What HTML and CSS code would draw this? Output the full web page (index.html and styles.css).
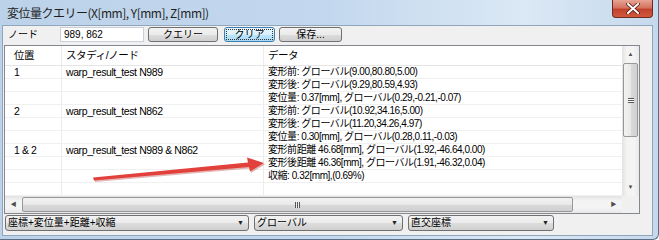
FILE: index.html
```html
<!DOCTYPE html>
<html lang="ja">
	<head>
		<title>変位量クエリー</title>
		<meta charset="utf-8">
		<link rel="stylesheet" href="styles.css">
	</head>
	<body>
		<div class="window">
			<div class="titlebar">
				<span class="title">変位量クエリー(X[mm], Y[mm], Z[mm])</span>
				<div class="close">
					<svg width="14" height="11" viewBox="0 0 14 11"><path d="M2 1 L12 10 M12 1 L2 10" stroke="#5a1a14" stroke-width="3.6" stroke-linecap="round"/><path d="M2 1 L12 10 M12 1 L2 10" stroke="#ffffff" stroke-width="2" stroke-linecap="round"/></svg>
				</div>
			</div>
			<div class="client">
				<div class="toolbar">
					<span class="label">ノード</span>
					<div class="textbox">989, 862</div>
					<div class="btn w-query">クエリー</div>
					<div class="btn w-clear focus"><span class="focusrect">クリア</span></div>
					<div class="btn w-save">保存...</div>
				</div>
				<div class="listview">
					<div class="list-main">
						<div class="table">
							<div class="row header">
								<div class="cell">位置</div>
								<div class="cell">スタディ/ノード</div>
								<div class="cell">データ</div>
							</div>
							<div class="row"><div class="cell">1</div><div class="cell">warp_result_test N989</div><div class="cell">変形前: グローバル(9.00,80.80,5.00)</div></div>
							<div class="row"><div class="cell"></div><div class="cell"></div><div class="cell">変形後: グローバル(9.29,80.59,4.93)</div></div>
							<div class="row"><div class="cell"></div><div class="cell"></div><div class="cell">変位量: 0.37[mm], グローバル(0.29,-0.21,-0.07)</div></div>
							<div class="row"><div class="cell">2</div><div class="cell">warp_result_test N862</div><div class="cell">変形前: グローバル(10.92,34.16,5.00)</div></div>
							<div class="row"><div class="cell"></div><div class="cell"></div><div class="cell">変形後: グローバル(11.20,34.26,4.97)</div></div>
							<div class="row"><div class="cell"></div><div class="cell"></div><div class="cell">変位量: 0.30[mm], グローバル(0.28,0.11,-0.03)</div></div>
							<div class="row"><div class="cell">1 &amp; 2</div><div class="cell">warp_result_test N989 &amp; N862</div><div class="cell">変形前距離 46.68[mm], グローバル(1.92,-46.64,0.00)</div></div>
							<div class="row"><div class="cell"></div><div class="cell"></div><div class="cell">変形後距離 46.36[mm], グローバル(1.91,-46.32,0.04)</div></div>
							<div class="row"><div class="cell"></div><div class="cell"></div><div class="cell">収縮: 0.32[mm],(0.69%)</div></div>
							<div class="row"><div class="cell"></div><div class="cell"></div><div class="cell"></div></div>
						</div>
						<div class="vscroll">
							<div class="sb-arrow">&#9650;</div>
							<div class="vtrack">
								<div class="vthumb"><span class="grip-v"></span></div>
							</div>
							<div class="sb-arrow">&#9660;</div>
						</div>
					</div>
					<div class="hscroll">
						<div class="sb-arrow">&#9664;</div>
						<div class="htrack">
							<div class="hthumb"><span class="grip-h"></span></div>
						</div>
						<div class="sb-arrow">&#9654;</div>
						<div class="corner"></div>
					</div>
				</div>
				<div class="combos">
					<div class="combo w-mode"><span>座標+変位量+距離+収縮</span><span class="drop">&#9660;</span></div>
					<div class="combo w-coord"><span>グローバル</span><span class="drop">&#9660;</span></div>
					<div class="combo w-sys"><span>直交座標</span><span class="drop">&#9660;</span></div>
				</div>
			</div>
			<!-- annotation arrow drawn over the list -->
			<svg class="arrow" width="659" height="240" viewBox="0 0 659 240">
				<path d="M93 177.5 L248 162.5 L247 157.5 L264 163 L250 171.5 L249 167 L94 180.5 Z" fill="#b0302c" opacity="0.35" transform="translate(1,1.5)"/>
				<path d="M93 177.5 L248 162.5 L247 157.5 L264 163 L250 171.5 L249 167 L94 180.5 Z" fill="#e2403b"/>
			</svg>
		</div>
	</body>
</html>
```

FILE: styles.css
```css
* {box-sizing: border-box}

body {
	margin: 0;
	font-family: "Liberation Sans", "Noto Sans CJK JP", sans-serif;
	font-size: 11px;
	color: #000;
}

/* Window frame */
.window {
	position: relative;
	width: 659px;
	height: 240px;
	background: linear-gradient(90deg, #bcd2e8 0%, #c3d8ee 50%, #dbe8f5 80%, #c6d9ec 100%);
	border-right: 1px solid #5a6f84;
	border-bottom: 1px solid #5a6f84;
	border-bottom-right-radius: 6px;
	overflow: hidden;
}

.titlebar {
	height: 25px;
	display: flex;
	justify-content: space-between;
	align-items: flex-start;
}
.title {
	padding: 5px 0 0 7px;
	font-family: "Noto Sans CJK JP", sans-serif;
	font-size: 12px;
	letter-spacing: -0.5px;
	line-height: 15px;
	color: #1e1e1e;
}
.close {
	width: 41px;
	height: 18px;
	margin-right: 5px;
	background: linear-gradient(#e8a493 0%, #d4735f 45%, #c2412d 55%, #cf5a3e 100%);
	border: 1px solid #6e2a22;
	border-top: none;
	border-radius: 0 0 4px 4px;
	display: flex;
	align-items: center;
	justify-content: center;
}

/* Client area */
.client {
	margin: 0 5px 0 2px;
	height: 211px;
	background: #f0f0f0;
	border: 1px solid #8fa6bd;
	padding: 1px 0 0 1px;
}

.toolbar {
	display: flex;
	align-items: center;
	height: 15px;
}
.label {
	width: 56px;
	padding-left: 4px;
	font-size: 10px;
	line-height: 12px;
}
.textbox {
	width: 84px;
	height: 15px;
	background: #fff;
	border: 1px solid #c8cfd8;
	padding-left: 3px;
	font-size: 10px;
	line-height: 13px;
}
.btn {
	height: 15px;
	margin-left: 4px;
	border: 1px solid #707070;
	border-radius: 3px;
	background: linear-gradient(#f2f2f2 0%, #ebebeb 50%, #dddddd 51%, #cfcfcf 100%);
	text-align: center;
	font-size: 10px;
	line-height: 13px;
}
.w-query { width: 70px; }
.w-clear { width: 51px; margin-left: 6px; }
.w-save { width: 63px; }
.btn.focus {
	border-color: #3c7fb1;
	background: linear-gradient(#eaf6fd 0%, #d9f0fc 50%, #bee6fd 51%, #a7d9f5 100%);
	padding: 1px;
}
.focusrect {
	display: block;
	height: 11px;
	border: 1px dotted #333;
	line-height: 9px;
}

/* List view */
.listview {
	margin-top: 3px;
	width: 636px;
	height: 169px;
	border: 1px solid #828790;
	background: #fff;
}
.list-main {
	display: flex;
	height: 150px;
}
.table {
	flex: 1;
	overflow: hidden;
}
.row {
	display: grid;
	grid-template-columns: 57px 202px 1fr;
	height: 13px;
	background: linear-gradient(transparent 12px, #f0f0f0 12px);
}
.row.header {
	height: 20px;
	background: linear-gradient(transparent 19px, #e5e5e5 19px);
}
.cell {
	padding-left: 4px;
	height: 12px;
	overflow: hidden;
	line-height: 12px;
	white-space: nowrap;
	border-right: 1px solid #ececec;
	letter-spacing: -0.4px;
	font-size: 10.5px;
}
.cell:first-child { padding-left: 9px; }
.cell:last-child {
	border-right: none;
	font-size: 10px;
	letter-spacing: -0.45px;
}
.header .cell {
	height: 19px;
	line-height: 19px;
	font-size: 10.5px;
}

/* Scroll bars */
.vscroll {
	width: 17px;
	display: flex;
	flex-direction: column;
	background: linear-gradient(90deg, #e3e3e3, #f4f4f4 30%, #f4f4f4 70%, #e8e8e8);
}
.sb-arrow {
	width: 17px;
	height: 17px;
	font-size: 6px;
	line-height: 17px;
	text-align: center;
	color: #4d4d4d;
	flex: none;
}
.vtrack {
	flex: 1;
	padding: 0 1px;
}
.vthumb {
	height: 74px;
	border: 1px solid #979797;
	border-radius: 2px;
	background: linear-gradient(90deg, #f3f3f3, #e8e8e8 50%, #d9d9d9 51%, #d0d0d0);
	display: flex;
	align-items: center;
	justify-content: center;
}
.grip-v {
	width: 6px;
	height: 5px;
	border-top: 1px solid #555;
	border-bottom: 1px solid #555;
	background: linear-gradient(#fff 40%, #555 40%, #555 60%, #fff 60%);
}
.hscroll {
	display: flex;
	height: 17px;
	background: linear-gradient(#e3e3e3, #f4f4f4 30%, #f4f4f4 70%, #e8e8e8);
}
.htrack {
	flex: 1;
	padding: 1px 0;
}
.hthumb {
	height: 15px;
	width: 551px;
	border: 1px solid #979797;
	border-radius: 2px;
	background: linear-gradient(#f3f3f3, #e8e8e8 50%, #d9d9d9 51%, #d0d0d0);
	display: flex;
	align-items: center;
	justify-content: center;
}
.grip-h {
	width: 5px;
	height: 6px;
	border-left: 1px solid #555;
	border-right: 1px solid #555;
	background: linear-gradient(90deg, #f0f0f0 40%, #555 40%, #555 60%, #f0f0f0 60%);
}
.corner {
	width: 17px;
	background: #f0f0f0;
}

/* Combo boxes */
.combos {
	display: flex;
	margin-top: 1px;
}
.combo {
	height: 16px;
	margin-left: 5px;
	border: 1px solid #707070;
	border-radius: 3px;
	background: linear-gradient(#f2f2f2 0%, #ebebeb 50%, #dddddd 51%, #cfcfcf 100%);
	display: flex;
	justify-content: space-between;
	padding: 0 4px 0 2px;
	font-size: 10px;
	line-height: 14px;
}
.combo:first-child { margin-left: 1px; }
.drop {
	font-size: 7px;
	color: #222;
}
.w-mode { width: 244px; }
.w-coord { width: 149px; }
.w-sys { width: 146px; }

.arrow {
	position: absolute;
	left: 0;
	top: 0;
	pointer-events: none;
}
```
